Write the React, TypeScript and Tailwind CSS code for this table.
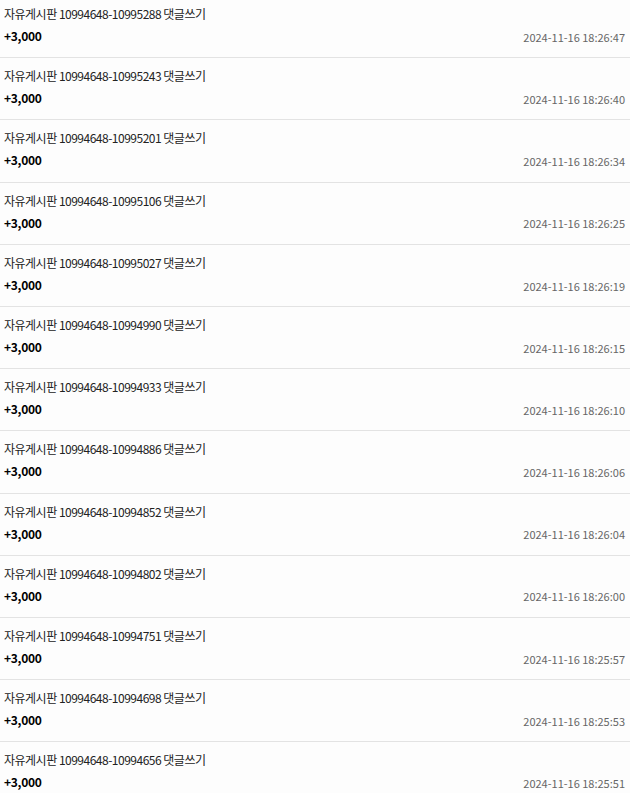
import React from 'react';

const rows = [
  ['10995288', '26:47'],
  ['10995243', '26:40'],
  ['10995201', '26:34'],
  ['10995106', '26:25'],
  ['10995027', '26:19'],
  ['10994990', '26:15'],
  ['10994933', '26:10'],
  ['10994886', '26:06'],
  ['10994852', '26:04'],
  ['10994802', '26:00'],
  ['10994751', '25:57'],
  ['10994698', '25:53'],
  ['10994656', '25:51'],
];

const App = () => {
  return (
    <div className="w-[630px] h-[793px] overflow-hidden bg-[#fdfdfd] font-['Noto_Sans_CJK_KR','Noto_Sans',sans-serif]">
      <div className="-mt-[4px]">
        {rows.map(([id, time], i) => (
          <div key={i} className="h-[62.2px] border-b border-[#e3e3e3] pl-[4px] pr-[5px] pt-[10px]">
            <div className="text-[12px] leading-[16px] text-[#222] tracking-[-0.5px]">
              자유게시판 10994648-{id} 댓글쓰기
            </div>
            <div className="flex justify-between items-center mt-[6px] h-[16px]">
              <span className="text-[12px] font-bold text-black tracking-[-0.3px]">+3,000</span>
              <span className="text-[11px] text-[#666] tracking-[0px] mt-[2px]">2024-11-16 18:{time}</span>
            </div>
          </div>
        ))}
      </div>
    </div>
  );
};

export default App;
